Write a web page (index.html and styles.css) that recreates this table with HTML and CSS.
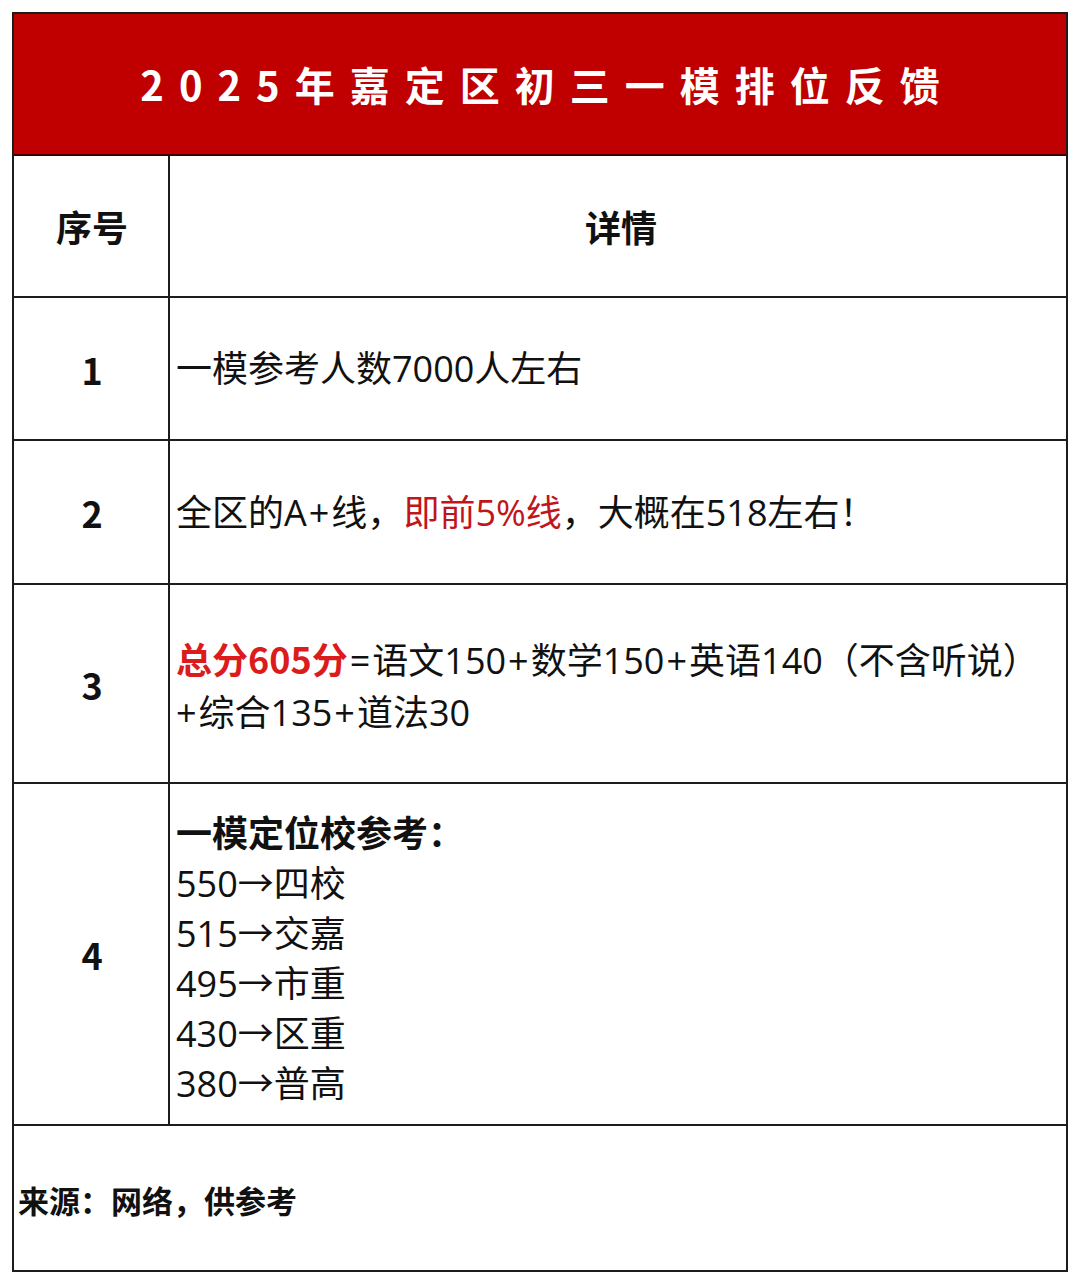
FILE: index.html
```html
<!DOCTYPE html>
<html lang="zh-CN">
<head>
<meta charset="utf-8">
<title>2025年嘉定区初三一模排位反馈</title>
<link rel="stylesheet" href="styles.css">
</head>
<body>
<div class="sheet">
  <div class="title">2025年嘉定区初三一模排位反馈</div>
  <div class="row head">
    <div class="num">序号</div>
    <div class="detail center">详情</div>
  </div>
  <div class="row r1">
    <div class="num">1</div>
    <div class="detail">一模参考人数7000人左右</div>
  </div>
  <div class="row r2">
    <div class="num">2</div>
    <div class="detail">全区的A<span class="op">+</span>线，<span class="red">即前5%线</span>，大概在518左右！</div>
  </div>
  <div class="row r3">
    <div class="num">3</div>
    <div class="detail"><span class="red-bold">总分605分</span><span class="op">=</span>语文150<span class="op">+</span>数学150<span class="op">+</span>英语140（不含听说）<br><span class="op first">+</span>综合135<span class="op">+</span>道法30</div>
  </div>
  <div class="row r4">
    <div class="num">4</div>
    <div class="detail list"><b>一模定位校参考：</b><br>550→四校<br>515→交嘉<br>495→市重<br>430→区重<br>380→普高</div>
  </div>
  <div class="footer">来源：网络，供参考</div>
</div>
</body>
</html>
```
FILE: styles.css
```css
* { box-sizing: border-box; }
html, body {
  margin: 0;
  padding: 0;
  background: #fff;
}
body {
  font-family: "Open Sans", "Noto Sans CJK SC", sans-serif;
  color: #111;
}
.sheet {
  margin: 12px 0 0 12px;
  width: 1056px;
  border: 2px solid #1c1c1c;
  border-bottom: none;
}
.title {
  height: 142px;
  background: #c00000;
  border-bottom: 2px solid #3a0000;
  color: #fff;
  font-family: "Noto Sans CJK SC", sans-serif;
  font-weight: 700;
  font-size: 40px;
  letter-spacing: 15px;
  display: flex;
  align-items: center;
  justify-content: center;
  padding-left: 15px;
}
.row {
  display: grid;
  grid-template-columns: 156px 1fr;
  border-bottom: 2px solid #1c1c1c;
}
.num {
  border-right: 2px solid #1c1c1c;
  display: flex;
  align-items: center;
  justify-content: center;
  font-family: "Noto Sans CJK SC", sans-serif;
  font-weight: 700;
  font-size: 36px;
  padding-left: 2px;
}
.detail {
  display: flex;
  align-items: center;
  padding-left: 6px;
  font-size: 36px;
  line-height: 51px;
}
.detail.center {
  justify-content: center;
  font-family: "Noto Sans CJK SC", sans-serif;
  font-weight: 700;
}
.op { margin: 0 2px; }
.op.first { margin-left: 0; }
.head { height: 142px; }
.r1 { height: 143px; }
.r2 { height: 144px; }
.r3 { height: 199px; }
.r3 .detail { display: block; padding-top: 47px; line-height: 52px; }
.r4 { height: 342px; }
.r4 .detail { display: block; padding-top: 22px; line-height: 50px; }
.red { color: #c0161b; }
.red-bold { color: #dc1c1c; font-weight: 700; font-family: "Noto Sans CJK SC", sans-serif; }
.list b { font-family: "Noto Sans CJK SC", sans-serif; font-weight: 700; }
.footer {
  height: 146px;
  border-bottom: 2px solid #1c1c1c;
  display: flex;
  align-items: center;
  padding-left: 4px;
  padding-top: 2px;
  font-family: "Noto Sans CJK SC", sans-serif;
  font-weight: 700;
  font-size: 31px;
}
```
